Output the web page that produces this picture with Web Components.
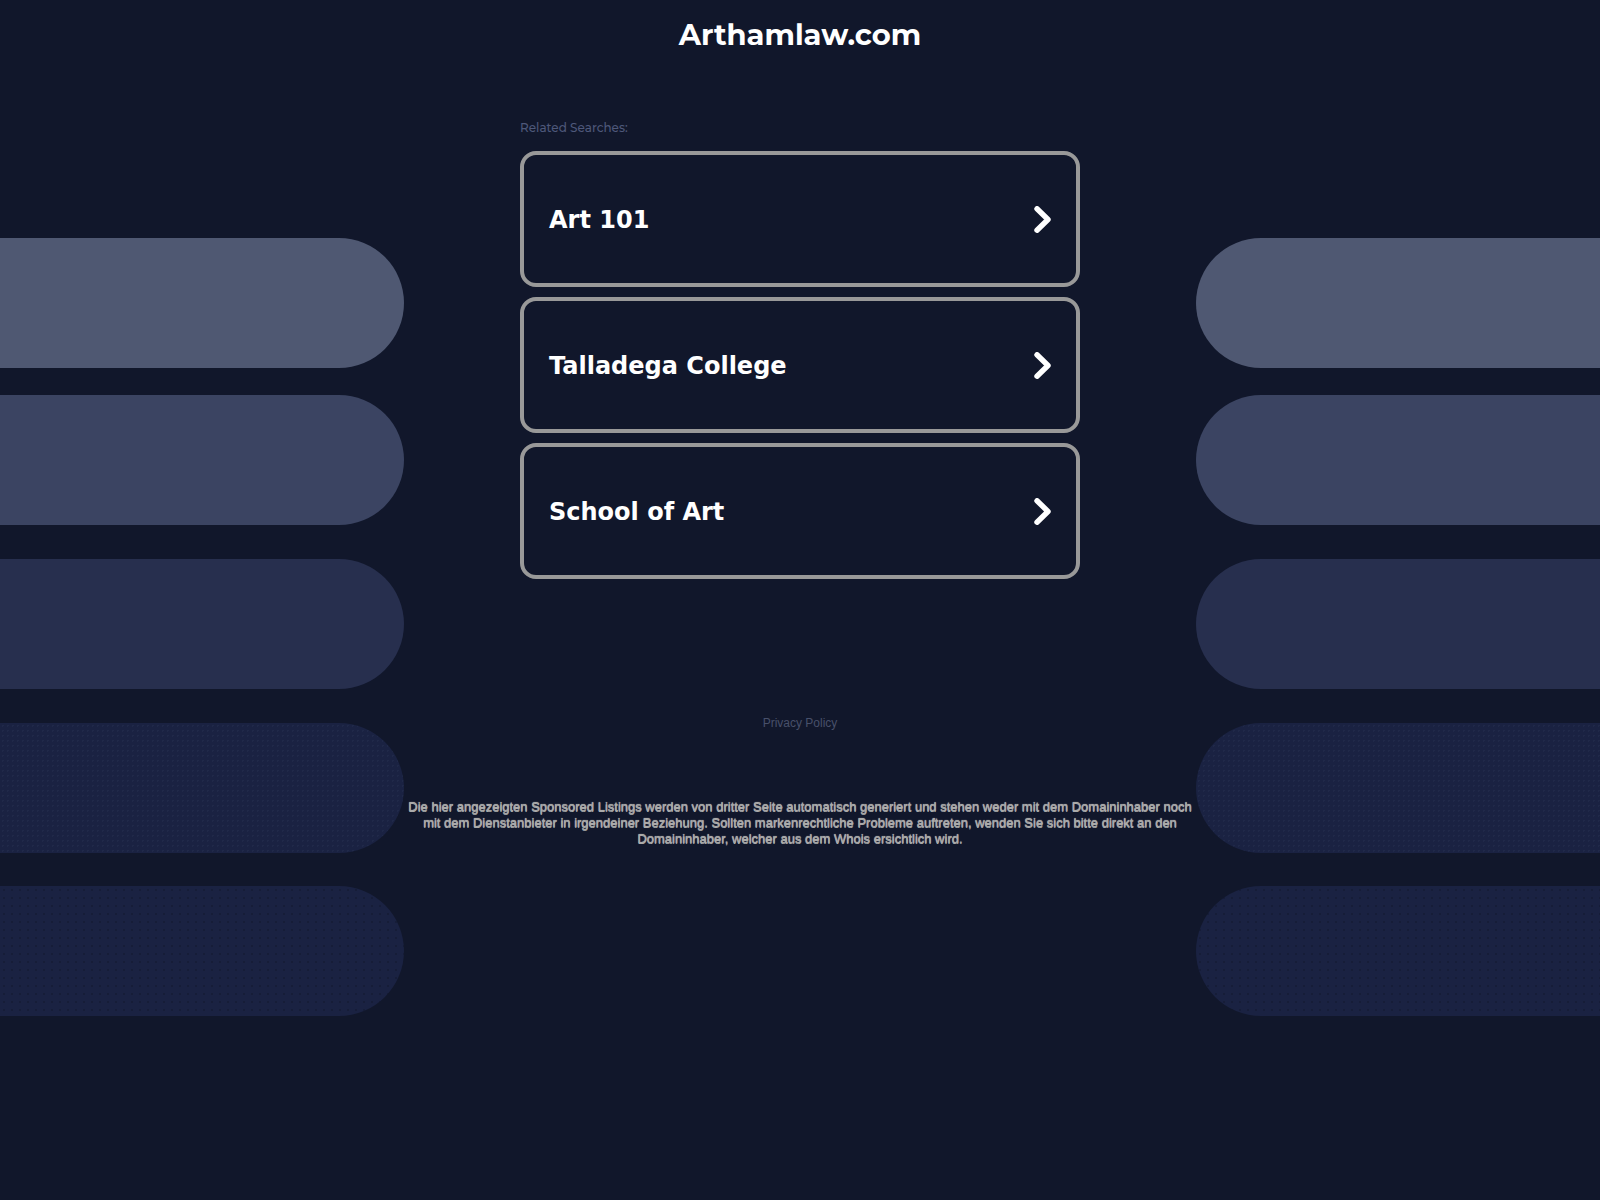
<!DOCTYPE html>
<html lang="de">
<head>
<meta charset="utf-8">
<meta name="viewport" content="width=device-width, initial-scale=1">
<title>Arthamlaw.com</title>
<style>
  html, body { margin: 0; min-height: 100%; background: #11172b; }
  body { font-family: "Liberation Sans", Arial, sans-serif; color: #fff; }
</style>
</head>
<body>
<parking-page>
  <page-title slot="header">Arthamlaw.com</page-title>
  <related-searches label="Related Searches:">
    <search-card href="#art-101">Art 101</search-card>
    <search-card href="#talladega-college">Talladega College</search-card>
    <search-card href="#school-of-art">School of Art</search-card>
  </related-searches>
  <page-footer slot="footer">Die hier angezeigten Sponsored Listings werden von dritter Seite automatisch generiert und stehen weder mit dem Domaininhaber noch mit dem Dienstanbieter in irgendeiner Beziehung. Sollten markenrechtliche Probleme auftreten, wenden Sie sich bitte direkt an den Domaininhaber, welcher aus dem Whois ersichtlich wird.</page-footer>
</parking-page>
<script>
  const define = (name, html) => {
    const template = document.createElement('template');
    template.innerHTML = html;
    customElements.define(name, class extends HTMLElement {
      constructor() {
        super();
        this.attachShadow({ mode: 'open' }).append(template.content.cloneNode(true));
      }
      connectedCallback() {
        const link = this.shadowRoot.querySelector('a[data-forward]');
        if (link) link.href = this.getAttribute('href');
        const label = this.shadowRoot.querySelector('[data-label]');
        if (label) label.textContent = this.getAttribute('label');
      }
    });
  };

  define('pill-column', `
    <style>
      :host { display: flex; flex-direction: column; padding-top: 238px; }
      div { height: 130px; border-radius: 0 65px 65px 0; }
      :host([side="right"]) div { border-radius: 65px 0 0 65px; }
      .p1 { background: #4f5872; margin-bottom: 27px; }
      .p2 { background: #3b4462; margin-bottom: 34px; }
      .p3 { background: #272f4e; margin-bottom: 34px; }
      .p4 { background: radial-gradient(circle, #202949 1px, transparent 1px) 0 0 / 5px 5px, #1a2242; margin-bottom: 33px; }
      .p5 { background: radial-gradient(circle, #161d38 1px, transparent 1px) 0 0 / 8px 8px, #1a2242; }
    </style>
    <div class="p1"></div><div class="p2"></div><div class="p3"></div><div class="p4"></div><div class="p5"></div>`);

  define('parking-page', `
    <style>
      :host { display: grid; grid-template-columns: minmax(0, 1fr) minmax(0, 792px) minmax(0, 1fr); min-height: 100vh; }
      main { display: flex; flex-direction: column; align-items: center; }
    </style>
    <pill-column side="left" aria-hidden="true"></pill-column>
    <main><slot name="header"></slot><slot></slot><slot name="footer"></slot></main>
    <pill-column side="right" aria-hidden="true"></pill-column>`);

  define('page-title', `
    <style>
      :host { display: block; padding-top: 17px; }
      h1 { margin: 0; font: 700 29px/36px Montserrat, Lato, sans-serif; text-align: center; }
    </style>
    <h1><slot></slot></h1>`);

  define('related-searches', `
    <style>
      :host { display: block; width: 100%; max-width: 560px; padding-top: 67px; }
      h2 { margin: 0 0 15px; font: 500 12px/16px Montserrat, Inter, sans-serif; color: #4e587a; }
      nav { display: flex; flex-direction: column; gap: 10px; }
    </style>
    <h2 data-label></h2>
    <nav><slot></slot></nav>`);

  define('search-card', `
    <style>
      :host { display: block; }
      a { display: flex; align-items: center; justify-content: space-between; box-sizing: border-box; min-height: 136px; padding: 1px 24px 0 25px; border: 4px solid #999; border-radius: 16px; color: #fff; text-decoration: none; font: 700 24px/32px Verdana, "DejaVu Sans", sans-serif; }
      svg { display: block; flex: none; width: 18px; height: 28px; }
    </style>
    <a data-forward><slot></slot>
      <svg viewBox="0 0 18 28" aria-hidden="true"><path d="M3 2.8 14 13.5 3 24.2" fill="none" stroke="#fff" stroke-width="5.4" stroke-linecap="round" stroke-linejoin="round"/></svg>
    </a>`);

  define('page-footer', `
    <style>
      :host { display: block; text-align: center; padding-top: 136px; }
      a { display: block; width: max-content; margin: 0 auto; color: #48506a; font-size: 12px; line-height: 16px; text-decoration: none; }
      p { margin: 68px 0 0; padding: 0 2px; color: #aaa; font-size: 13px; line-height: 16px; text-shadow: 0 1px 0 #aaa, 0 0 1px #aaa; }
    </style>
    <a href="#privacy">Privacy Policy</a>
    <p><slot></slot></p>`);
</script>
</body>
</html>
